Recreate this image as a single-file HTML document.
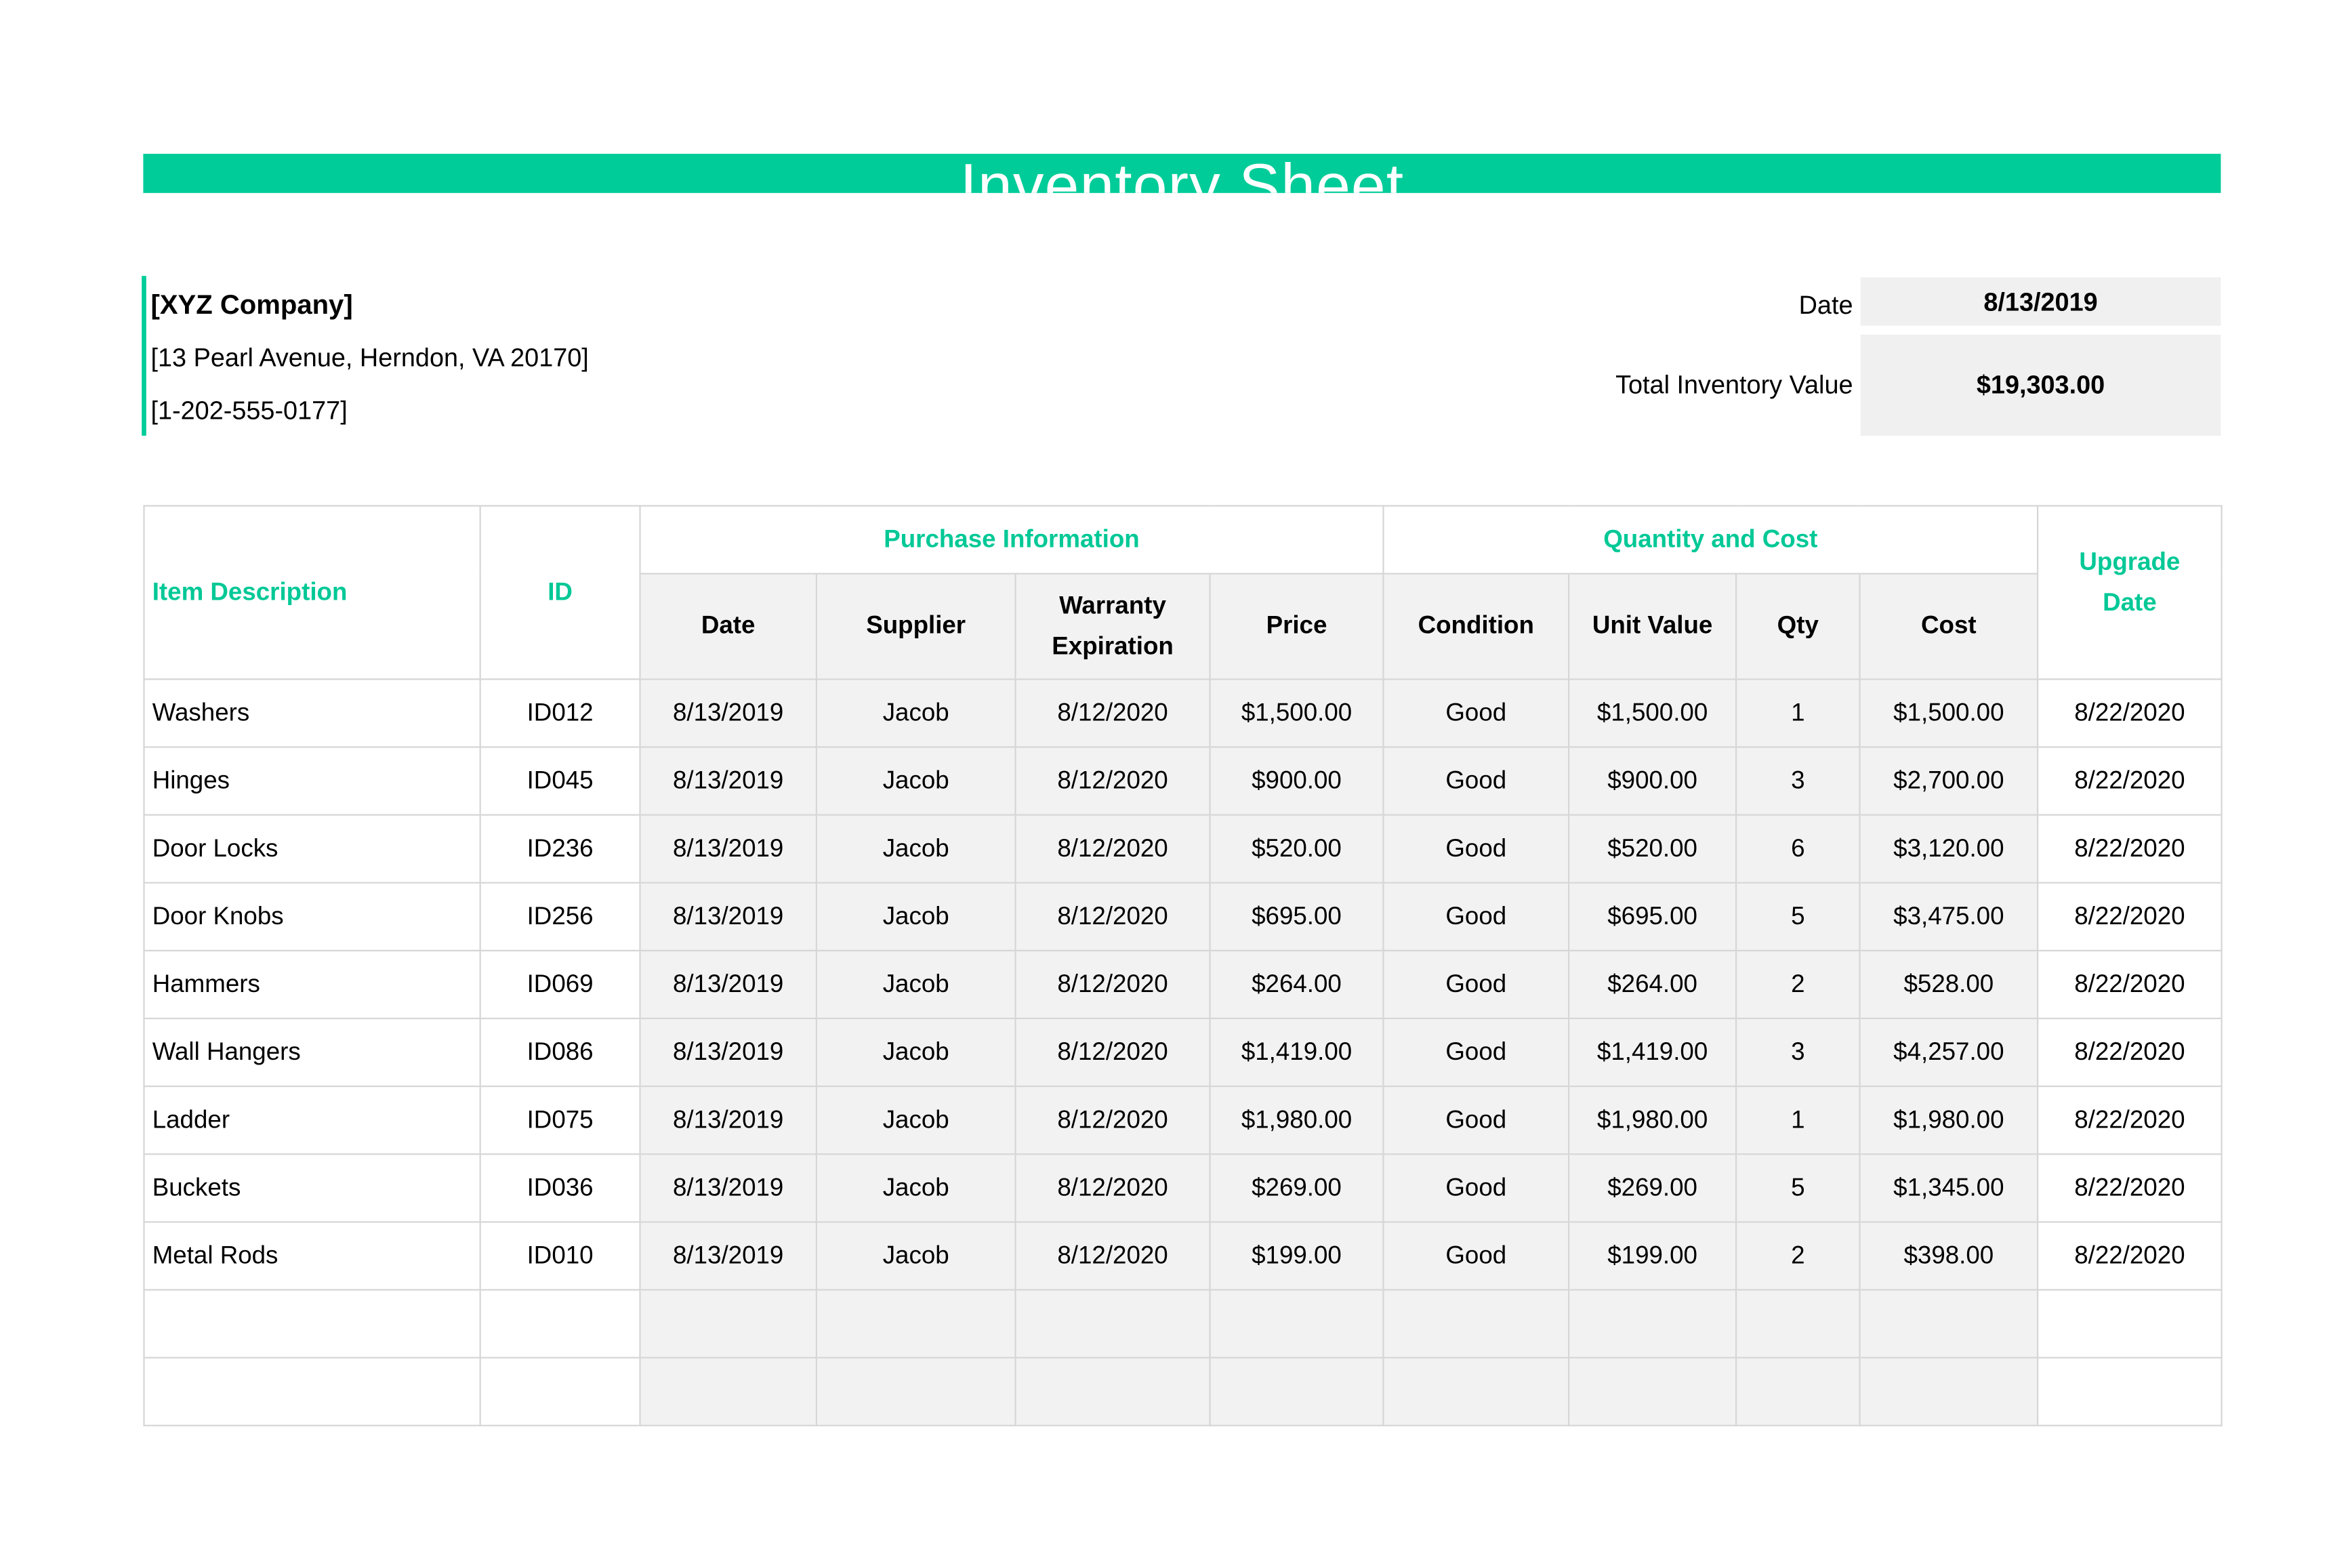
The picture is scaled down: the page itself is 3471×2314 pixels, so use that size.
<!DOCTYPE html>
<html><head><meta charset="utf-8">
<style>
html,body{margin:0;padding:0;background:#fff;}
body{width:3471px;height:2314px;overflow:hidden;position:relative;}
#w{position:absolute;left:0;top:0;width:1560px;height:1040px;transform:scale(2.225);transform-origin:0 0;font-family:"Liberation Sans",sans-serif;color:#000;}
.bar{position:absolute;left:95px;top:102px;width:1378px;height:26px;background:#00cc99;overflow:hidden;}
.bar span{position:absolute;left:0;width:100%;text-align:center;top:-4px;font-size:41px;line-height:50px;color:#fff;letter-spacing:0.5px;}
.vl{position:absolute;left:94px;top:183px;width:3px;height:106px;background:#00cc99;}
.t{position:absolute;font-size:17px;white-space:nowrap;}
.box{position:absolute;background:#f0f0f0;text-align:center;font-weight:bold;font-size:17px;}
table{position:absolute;left:95px;top:335px;border-collapse:collapse;table-layout:fixed;width:1378px;}
td{border:1.3px solid #d6d6d6;font-size:16.5px;text-align:center;padding:0;height:44px;white-space:nowrap;overflow:hidden;}
td.l{text-align:left;padding-left:5px;}
.g{background:#f2f2f2;}
.h{color:#00c896;font-weight:bold;}
.hb{font-weight:bold;line-height:27px;}
</style></head><body><div id="w">
<div class="bar"><span>Inventory Sheet</span></div>
<div class="vl"></div>
<div class="t" style="left:100px;top:192px;font-weight:bold;font-size:18px;">[XYZ Company]</div>
<div class="t" style="left:100px;top:228px;">[13 Pearl Avenue, Herndon, VA 20170]</div>
<div class="t" style="left:100px;top:263px;">[1-202-555-0177]</div>
<div class="t" style="right:331px;top:193px;">Date</div>
<div class="t" style="right:331px;top:246px;">Total Inventory Value</div>
<div class="box" style="left:1234px;top:184px;width:239px;height:32px;line-height:34px;">8/13/2019</div>
<div class="box" style="left:1234px;top:222px;width:239px;height:67px;line-height:68px;">$19,303.00</div>
<table>
<colgroup><col style="width:223px"><col style="width:106px"><col style="width:117px"><col style="width:132px"><col style="width:129px"><col style="width:115px"><col style="width:123px"><col style="width:111px"><col style="width:82px"><col style="width:118px"><col style="width:122px"></colgroup>
<tr><td rowspan="2" class="l h">Item Description</td><td rowspan="2" class="h">ID</td><td colspan="4" class="h" style="height:43px">Purchase Information</td><td colspan="4" class="h">Quantity and Cost</td><td rowspan="2" class="h" style="line-height:27px;padding-bottom:12px">Upgrade<br>Date</td></tr>
<tr style="height:70px"><td class="g hb" style="height:69px">Date</td><td class="g hb">Supplier</td><td class="g hb">Warranty<br>Expiration</td><td class="g hb">Price</td><td class="g hb">Condition</td><td class="g hb">Unit Value</td><td class="g hb">Qty</td><td class="g hb">Cost</td></tr>
<tr><td class="l">Washers</td><td>ID012</td><td class="g">8/13/2019</td><td class="g">Jacob</td><td class="g">8/12/2020</td><td class="g">$1,500.00</td><td class="g">Good</td><td class="g">$1,500.00</td><td class="g">1</td><td class="g">$1,500.00</td><td>8/22/2020</td></tr>
<tr><td class="l">Hinges</td><td>ID045</td><td class="g">8/13/2019</td><td class="g">Jacob</td><td class="g">8/12/2020</td><td class="g">$900.00</td><td class="g">Good</td><td class="g">$900.00</td><td class="g">3</td><td class="g">$2,700.00</td><td>8/22/2020</td></tr>
<tr><td class="l">Door Locks</td><td>ID236</td><td class="g">8/13/2019</td><td class="g">Jacob</td><td class="g">8/12/2020</td><td class="g">$520.00</td><td class="g">Good</td><td class="g">$520.00</td><td class="g">6</td><td class="g">$3,120.00</td><td>8/22/2020</td></tr>
<tr><td class="l">Door Knobs</td><td>ID256</td><td class="g">8/13/2019</td><td class="g">Jacob</td><td class="g">8/12/2020</td><td class="g">$695.00</td><td class="g">Good</td><td class="g">$695.00</td><td class="g">5</td><td class="g">$3,475.00</td><td>8/22/2020</td></tr>
<tr><td class="l">Hammers</td><td>ID069</td><td class="g">8/13/2019</td><td class="g">Jacob</td><td class="g">8/12/2020</td><td class="g">$264.00</td><td class="g">Good</td><td class="g">$264.00</td><td class="g">2</td><td class="g">$528.00</td><td>8/22/2020</td></tr>
<tr><td class="l">Wall Hangers</td><td>ID086</td><td class="g">8/13/2019</td><td class="g">Jacob</td><td class="g">8/12/2020</td><td class="g">$1,419.00</td><td class="g">Good</td><td class="g">$1,419.00</td><td class="g">3</td><td class="g">$4,257.00</td><td>8/22/2020</td></tr>
<tr><td class="l">Ladder</td><td>ID075</td><td class="g">8/13/2019</td><td class="g">Jacob</td><td class="g">8/12/2020</td><td class="g">$1,980.00</td><td class="g">Good</td><td class="g">$1,980.00</td><td class="g">1</td><td class="g">$1,980.00</td><td>8/22/2020</td></tr>
<tr><td class="l">Buckets</td><td>ID036</td><td class="g">8/13/2019</td><td class="g">Jacob</td><td class="g">8/12/2020</td><td class="g">$269.00</td><td class="g">Good</td><td class="g">$269.00</td><td class="g">5</td><td class="g">$1,345.00</td><td>8/22/2020</td></tr>
<tr><td class="l">Metal Rods</td><td>ID010</td><td class="g">8/13/2019</td><td class="g">Jacob</td><td class="g">8/12/2020</td><td class="g">$199.00</td><td class="g">Good</td><td class="g">$199.00</td><td class="g">2</td><td class="g">$398.00</td><td>8/22/2020</td></tr>
<tr><td></td><td></td><td class="g"></td><td class="g"></td><td class="g"></td><td class="g"></td><td class="g"></td><td class="g"></td><td class="g"></td><td class="g"></td><td></td></tr>
<tr><td></td><td></td><td class="g"></td><td class="g"></td><td class="g"></td><td class="g"></td><td class="g"></td><td class="g"></td><td class="g"></td><td class="g"></td><td></td></tr>
</table>
</div></body></html>
